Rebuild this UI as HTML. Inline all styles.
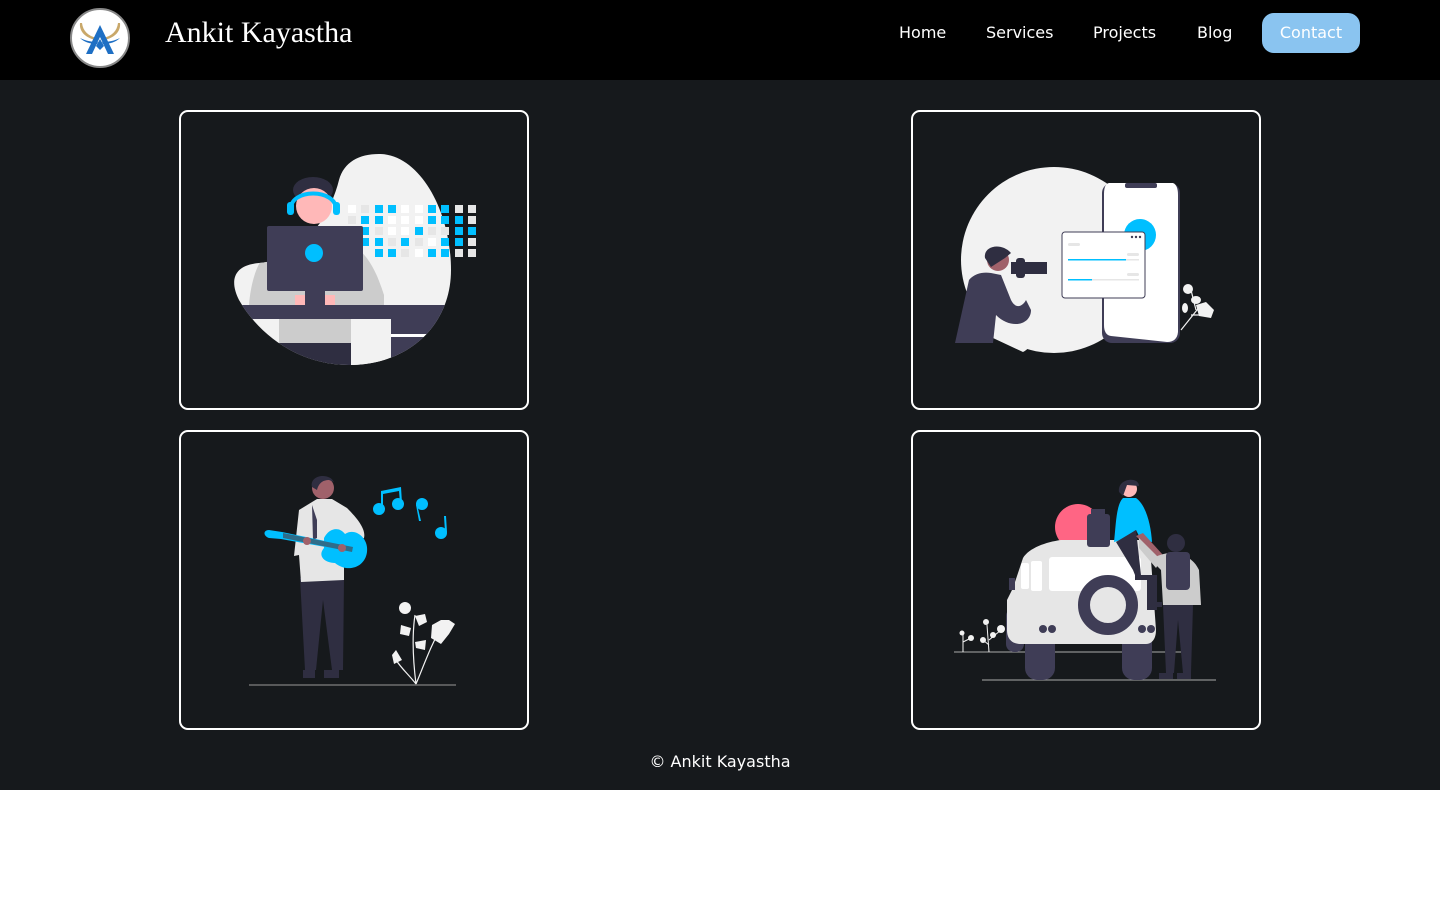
<!DOCTYPE html>
<html><head><meta charset="utf-8"><style>
*{margin:0;padding:0;box-sizing:border-box}
body{width:1440px;height:900px;background:#fff;font-family:"DejaVu Sans",sans-serif;overflow:hidden;position:relative}
header{position:absolute;left:0;top:0;width:1440px;height:80px;background:#000}
.logo{position:absolute;left:70px;top:8px;width:60px;height:60px}
.title{position:absolute;left:165px;top:16px;font-family:"Liberation Serif",serif;font-size:30px;color:#fff;white-space:nowrap}
nav a{position:absolute;top:23px;color:#fff;font-size:16px;text-decoration:none;white-space:nowrap}
.btn{position:absolute;left:1262px;top:13px;width:98px;height:40px;border-radius:12px;background:#8ac4f0;color:#fff;font-size:16px;text-align:center;line-height:40px}
main{position:absolute;left:0;top:80px;width:1440px;height:710px;background:#16191c}
.card{position:absolute;width:350px;height:300px;border:2px solid #fff;border-radius:9px;overflow:hidden}
.card svg{position:absolute;left:-2px;top:-2px}
.foot{position:absolute;top:752px;left:0;width:1440px;text-align:center;color:#fff;font-size:16px}
</style></head><body>
<header>
<svg class="logo" viewBox="0 0 60 60">
<circle cx="30" cy="30" r="29" fill="#fff" stroke="#888" stroke-width="2"/>
<path d="M10 15 C9 24 16 30 26 32 L27 30 C18 28 13 23 12 15Z" fill="#c9a86a"/>
<path d="M50 15 C51 24 44 30 34 32 L33 30 C42 28 47 23 48 15Z" fill="#c9a86a"/>
<path d="M30 17 L44 46 L38 46 L30 29 L22 46 L16 46Z" fill="#1e6fc4"/>
<path d="M30 31 L34 38 L30 42 L26 38Z" fill="#1e6fc4"/>
<path d="M10 30 C16 33 22 34 28 34 L27 36 C20 36 14 34 10 30Z" fill="#1e6fc4"/>
<path d="M50 30 C44 33 38 34 32 34 L33 36 C40 36 46 34 50 30Z" fill="#1e6fc4"/>
</svg>
<div class="title">Ankit Kayastha</div>
<nav><a style="left:899px">Home</a><a style="left:986px">Services</a><a style="left:1093px">Projects</a><a style="left:1197px">Blog</a></nav>
<div class="btn">Contact</div>
</header>
<main></main>

<div class="card" style="left:179px;top:110px">
<svg width="350" height="300" viewBox="0 0 350 300">
<defs><clipPath id="b1"><path d="M200 44 C240 44 272 100 272 160 C272 215 230 255 170 255 C120 255 80 225 60 190 C50 170 55 155 80 153 C120 150 150 110 160 70 C165 52 180 44 200 44Z"/></clipPath></defs>
<g clip-path="url(#b1)">
<rect x="0" y="0" width="350" height="300" fill="#f2f2f2"/>
<path d="M70 195 C72 170 80 138 105 132 L165 132 C190 138 200 170 205 185 L205 195Z" fill="#ccc"/>
<rect x="40" y="195" width="240" height="14" fill="#3f3d56"/>
<rect x="100" y="209" width="72" height="24" fill="#ccc"/>
<rect x="90" y="233" width="82" height="30" fill="#2f2e41"/>
<rect x="172" y="209" width="40" height="50" fill="#f2f2f2"/>
<rect x="212" y="209" width="60" height="50" fill="#3f3d56"/>
<rect x="212" y="224" width="60" height="3" fill="#fff"/>
</g>
<g transform="translate(-2,0)">
<g fill="#fff"><rect x="171" y="95" width="8" height="8"/><rect x="224" y="95" width="8" height="8"/><rect x="238" y="95" width="8" height="8"/><rect x="211" y="106" width="8" height="8"/><rect x="224" y="106" width="8" height="8"/><rect x="238" y="106" width="8" height="8"/><rect x="211" y="117" width="8" height="8"/><rect x="224" y="117" width="8" height="8"/><rect x="251" y="128" width="8" height="8"/><rect x="238" y="139" width="8" height="8"/></g>
<g fill="#e6e6e6"><rect x="184" y="95" width="8" height="8"/><rect x="278" y="95" width="8" height="8"/><rect x="291" y="95" width="8" height="8"/><rect x="171" y="106" width="8" height="8"/><rect x="291" y="106" width="8" height="8"/><rect x="198" y="117" width="8" height="8"/><rect x="251" y="117" width="8" height="8"/><rect x="264" y="117" width="8" height="8"/><rect x="211" y="128" width="8" height="8"/><rect x="238" y="128" width="8" height="8"/><rect x="291" y="128" width="8" height="8"/><rect x="224" y="139" width="8" height="8"/><rect x="278" y="139" width="8" height="8"/><rect x="291" y="139" width="8" height="8"/></g>
<g fill="#00bfff"><rect x="198" y="95" width="8" height="8"/><rect x="211" y="95" width="8" height="8"/><rect x="251" y="95" width="8" height="8"/><rect x="264" y="95" width="8" height="8"/><rect x="184" y="106" width="8" height="8"/><rect x="198" y="106" width="8" height="8"/><rect x="251" y="106" width="8" height="8"/><rect x="264" y="106" width="8" height="8"/><rect x="278" y="106" width="8" height="8"/><rect x="184" y="117" width="8" height="8"/><rect x="238" y="117" width="8" height="8"/><rect x="278" y="117" width="8" height="8"/><rect x="291" y="117" width="8" height="8"/><rect x="184" y="128" width="8" height="8"/><rect x="198" y="128" width="8" height="8"/><rect x="224" y="128" width="8" height="8"/><rect x="264" y="128" width="8" height="8"/><rect x="278" y="128" width="8" height="8"/><rect x="198" y="139" width="8" height="8"/><rect x="211" y="139" width="8" height="8"/><rect x="251" y="139" width="8" height="8"/><rect x="264" y="139" width="8" height="8"/></g>
</g>
<ellipse cx="134" cy="80" rx="20" ry="13" fill="#2f2e41"/>
<circle cx="135" cy="96" r="18" fill="#ffb8b8"/>
<path d="M112 100 C110 78 158 78 157 100" fill="none" stroke="#00bfff" stroke-width="4"/>
<rect x="108" y="92" width="7" height="13" rx="3" fill="#00bfff"/><rect x="154" y="92" width="7" height="13" rx="3" fill="#00bfff"/>
<rect x="116" y="185" width="10" height="10" fill="#ffb8b8"/><rect x="146" y="185" width="10" height="10" fill="#ffb8b8"/>
<rect x="88" y="116" width="96" height="65" rx="2" fill="#3f3d56"/>
<rect x="126" y="181" width="20" height="16" fill="#3f3d56"/>
<circle cx="135" cy="143" r="9" fill="#00bfff"/>
</svg></div>

<div class="card" style="left:911px;top:110px">
<svg width="350" height="300" viewBox="0 0 350 300">
<circle cx="143" cy="150" r="93" fill="#f2f2f2"/>
<path d="M140 205 C130 215 122 238 112 242 L82 228 L60 200Z" fill="#f2f2f2"/>
<rect x="191" y="73" width="78" height="160" rx="10" fill="#3f3d56"/>
<path d="M198 73 L262 73 Q267 75 267 85 L267 222 Q266 232 256 232 L200 226 Q193 225 193 215 L193 84 Q193 74 198 73Z" fill="#fff"/>
<rect x="214" y="73" width="32" height="5" rx="2" fill="#3f3d56"/>
<circle cx="229" cy="125" r="16" fill="#00bfff"/>
<rect x="151" y="122" width="83" height="66" rx="3" fill="#fff" stroke="#3f3d56" stroke-width="1"/>
<circle cx="221" cy="127" r="1.2" fill="#3f3d56"/><circle cx="225" cy="127" r="1.2" fill="#3f3d56"/><circle cx="229" cy="127" r="1.2" fill="#3f3d56"/>
<rect x="157" y="133" width="12" height="3" rx="1.5" fill="#e6e6e6"/>
<rect x="216" y="143" width="12" height="3" rx="1.5" fill="#e6e6e6"/>
<rect x="216" y="163" width="12" height="3" rx="1.5" fill="#e6e6e6"/>
<rect x="157" y="149" width="71" height="1.5" fill="#e6e6e6"/><rect x="157" y="149" width="58" height="1.5" fill="#00bfff"/>
<rect x="157" y="169" width="71" height="1.5" fill="#e6e6e6"/><rect x="157" y="169" width="24" height="1.5" fill="#00bfff"/>
<path d="M44 233 L58 170 C64 163 72 162 80 163 L90 165 L100 190 C105 200 112 196 115 190 L120 200 C120 215 100 220 85 205 L82 233Z" fill="#3f3d56"/>
<circle cx="87" cy="150" r="11" fill="#a0616a"/>
<path d="M74 148 C72 136 90 132 100 143 L94 148 L80 157Z" fill="#2f2e41"/>
<rect x="100" y="152" width="36" height="12" fill="#2f2e41"/>
<rect x="105" y="148" width="9" height="20" rx="3" fill="#2f2e41"/>
<path d="M270 220 L290 195 M280 205 L300 205 M285 200 L280 180" stroke="#f2f2f2" stroke-width="1.2" fill="none"/>
<circle cx="277" cy="179" r="5" fill="#f2f2f2"/><ellipse cx="285" cy="190" rx="5" ry="4" fill="#f2f2f2"/><path d="M285 195 L295 192 L303 200 L300 208 L288 206Z" fill="#f2f2f2"/><ellipse cx="274" cy="198" rx="3" ry="5" fill="#f2f2f2"/>
</svg></div>

<div class="card" style="left:179px;top:430px">
<svg width="350" height="300" viewBox="0 0 350 300">
<line x1="70" y1="255" x2="277" y2="255" stroke="#999" stroke-width="1"/>
<path d="M121 148 L165 148 L164 240 L153 240 L144 170 L137 240 L126 240Z" fill="#2f2e41"/>
<rect x="124" y="240" width="12" height="8" fill="#2f2e41"/><rect x="145" y="240" width="15" height="8" fill="#2f2e41"/>
<path d="M138 69 L153 69 L168 78 C180 90 187 100 185 108 L165 120 L165 150 L122 152 L120 125 L115 126 L120 80Z" fill="#e6e6e6"/>
<path d="M133 75 L138 90 L138 108 L134 110Z" fill="#3f3d56"/>
<circle cx="144" cy="58" r="11" fill="#a0616a"/>
<path d="M133 57 C130 45 150 42 155 52 L150 50 C145 50 140 52 138 60Z" fill="#2f2e41"/>
<path d="M145 108 C150 98 160 96 166 104 C176 97 190 108 188 122 C186 138 168 143 156 133 C146 133 138 126 145 118Z" fill="#00bfff"/>
<path d="M90 100 L103 102 L175 117 L174 122 L102 109 L90 108 C84 106 84 100 90 100Z" fill="#00bfff"/>
<path d="M104 103 L174 117 L173 122 L104 108Z" fill="#2f6d8a"/>
<circle cx="128" cy="111" r="4" fill="#a0616a"/><circle cx="163" cy="118" r="4" fill="#a0616a"/>
<circle cx="200" cy="79" r="6" fill="#00bfff"/><circle cx="219" cy="74" r="6" fill="#00bfff"/>
<path d="M202 78 L202 61 L222 57 L223 73 L221 73 L220 61 L204 64 L204 78Z" fill="#00bfff"/>
<circle cx="243" cy="74" r="6" fill="#00bfff"/><path d="M238 74 L242 91 L240 91 L237 75Z" fill="#00bfff"/>
<circle cx="262" cy="103" r="6" fill="#00bfff"/><path d="M266 102 L265 86 L267 86 L268 102Z" fill="#00bfff"/>
<path d="M237 254 C234 230 233 205 236 185 M237 254 C245 235 252 215 262 198 M237 254 C230 245 222 238 217 230" stroke="#f2f2f2" stroke-width="1.2" fill="none"/>
<circle cx="226" cy="178" r="6" fill="#f2f2f2"/>
<path d="M236 186 L246 184 L248 192 L240 196Z M222 195 L232 198 L230 206 L221 204Z M236 212 L247 210 L246 220 L237 218Z M217 220 L223 230 L215 234 L213 225Z M253 195 L262 190 L270 190 L276 194 L270 204 L262 214 L252 208Z" fill="#f2f2f2"/>
</svg></div>

<div class="card" style="left:911px;top:430px">
<svg width="350" height="300" viewBox="0 0 350 300">
<line x1="43" y1="222" x2="270" y2="222" stroke="#aaa" stroke-width="1"/>
<line x1="71" y1="250" x2="305" y2="250" stroke="#aaa" stroke-width="1"/>
<circle cx="167" cy="97" r="23" fill="#ff6584"/>
<rect x="95" y="178" width="18" height="44" rx="8" fill="#3f3d56"/>
<rect x="114" y="200" width="30" height="50" rx="12" fill="#3f3d56"/>
<rect x="211" y="200" width="30" height="50" rx="12" fill="#3f3d56"/>
<path d="M112 128 C118 118 135 112 150 110 L230 110 C238 112 240 120 240 130 L245 200 C245 210 240 214 235 214 L110 214 C100 214 96 208 96 200 L96 170 L102 158 Z" fill="#e6e6e6"/>
<rect x="138" y="127" width="92" height="34" rx="3" fill="#fff"/>
<rect x="110" y="133" width="8" height="26" rx="2" fill="#fff"/><rect x="120" y="131" width="11" height="30" rx="2" fill="#fff"/>
<rect x="98" y="148" width="6" height="12" fill="#3f3d56"/>
<circle cx="197" cy="175" r="24" fill="#e6e6e6" stroke="#3f3d56" stroke-width="12"/>
<circle cx="132" cy="199" r="4" fill="#3f3d56"/><circle cx="141" cy="199" r="4" fill="#3f3d56"/>
<circle cx="231" cy="199" r="4" fill="#3f3d56"/><circle cx="240" cy="199" r="4" fill="#3f3d56"/>
<rect x="176" y="84" width="23" height="33" rx="3" fill="#3f3d56"/><rect x="180" y="79" width="14" height="6" fill="#3f3d56"/>
<path d="M203 112 C205 95 205 75 212 68 L225 68 C235 75 240 95 241 112 L230 110 L225 100 L210 110Z" fill="#00bfff"/>
<path d="M205 112 L225 100 L230 145 L226 150 L222 140 Z" fill="#2f2e41"/>
<rect x="224" y="145" width="12" height="5" fill="#2f2e41"/>
<circle cx="218" cy="59" r="8" fill="#ffb8b8"/><path d="M208 62 C206 48 228 46 228 56 L216 55 L212 66Z" fill="#2f2e41"/>
<path d="M225 106 L245 128 L252 125 L232 103Z" fill="#a0616a"/>
<path d="M240 130 C255 118 280 122 288 140 L290 175 L252 175 L250 140Z" fill="#ccc"/>
<path d="M228 108 L250 130 L245 138 L228 118Z" fill="#ccc"/>
<rect x="255" y="122" width="24" height="38" rx="4" fill="#3f3d56"/>
<circle cx="265" cy="113" r="9" fill="#2f2e41"/>
<path d="M252 175 L282 175 L280 243 L272 243 L267 190 L263 243 L255 243Z" fill="#2f2e41"/>
<rect x="248" y="243" width="14" height="6" fill="#2f2e41"/><rect x="266" y="243" width="14" height="6" fill="#2f2e41"/>
<rect x="236" y="145" width="10" height="35" fill="#2f2e41"/><rect x="237" y="172" width="14" height="5" fill="#2f2e41"/>
<path d="M52 222 L52 205 M52 212 L60 208 M78 222 L76 195 M78 210 L90 200 M78 215 L72 210" stroke="#f2f2f2" stroke-width="1" fill="none"/>
<circle cx="51" cy="203" r="2.5" fill="#f2f2f2"/><circle cx="60" cy="208" r="3" fill="#f2f2f2"/><circle cx="75" cy="192" r="3" fill="#f2f2f2"/><circle cx="90" cy="199" r="4" fill="#f2f2f2"/><circle cx="72" cy="210" r="3" fill="#f2f2f2"/><circle cx="82" cy="205" r="3" fill="#f2f2f2"/>
</svg></div>

<div class="foot">© Ankit Kayastha</div>
</body></html>
